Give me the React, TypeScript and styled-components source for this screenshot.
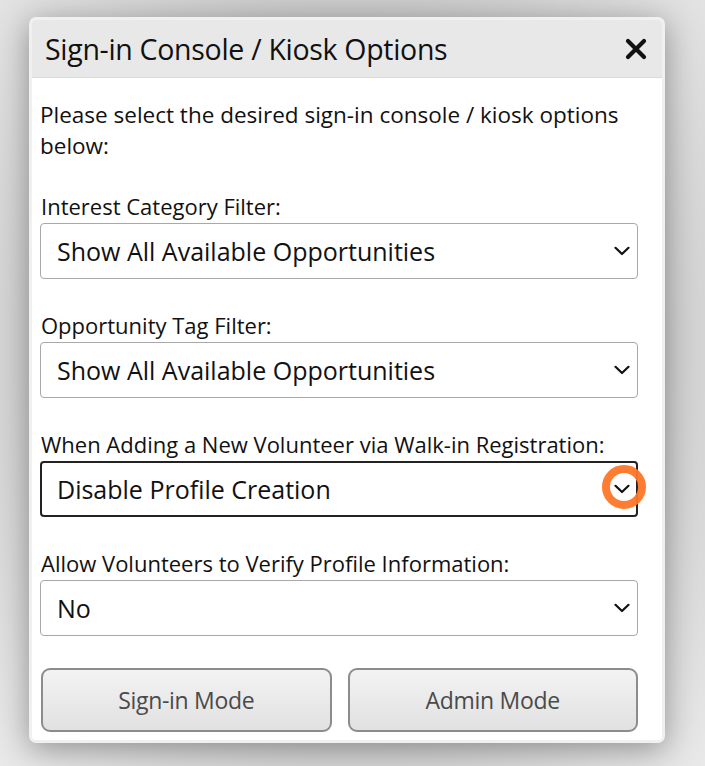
import React from "react";
import styled, { createGlobalStyle } from "styled-components";

const Global = createGlobalStyle`
  html, body { margin: 0; padding: 0; }
  body {
    width: 705px;
    height: 766px;
    background: #dcdcdc;
    font-family: "Open Sans", "Liberation Sans", sans-serif;
    overflow: hidden;
  }
`;

const Page = styled.div`
  width: 705px;
  height: 766px;
  padding: 17px 0 0 29px;
  box-sizing: border-box;
  background: radial-gradient(ellipse at 50% 45%, #b9b9b9 0%, #c9c9c9 55%, #e9e9e9 100%);
`;

const Dialog = styled.div`
  width: 636px;
  height: 726px;
  box-sizing: border-box;
  background: #fff;
  border: 3px solid #f0f0f0;
  border-radius: 7px;
  box-shadow: 0 6px 30px rgba(0, 0, 0, 0.35);
  overflow: hidden;
  display: flex;
  flex-direction: column;
`;

const Header = styled.div`
  height: 57px;
  background: #e8e8e8;
  border-bottom: 1px solid #dadada;
  display: flex;
  align-items: center;
  justify-content: space-between;
  padding: 0 14px 0 13px;
`;

const Title = styled.h1`
  margin: 0;
  font-size: 28.5px;
  font-weight: 400;
  color: #111;
  letter-spacing: -0.3px;
`;

const Close = styled.button`
  border: none;
  background: none;
  padding: 0;
  width: 24px;
  height: 24px;
  display: flex;
  align-items: center;
  justify-content: center;
`;

const Body = styled.div`
  padding: 21px 24px 0 8px;
  display: flex;
  flex-direction: column;
`;

const Intro = styled.p`
  margin: 0 0 30px 0;
  font-size: 22.5px;
  line-height: 31px;
  color: #111;
`;

const Field = styled.div`
  display: flex;
  flex-direction: column;
  margin-bottom: 31px;
`;

const Label = styled.label`
  font-size: 22px;
  line-height: 30px;
  color: #111;
  margin-bottom: 2px;
  padding-left: 1px;
`;

const SelectBox = styled.div<{ $focused?: boolean }>`
  position: relative;
  height: 56px;
  box-sizing: border-box;
  border: ${(p) => (p.$focused ? "2px solid #222" : "1px solid #a8a8a8")};
  border-radius: 4px;
  display: flex;
  align-items: center;
  justify-content: space-between;
  padding: 0 ${(p) => (p.$focused ? "6px 0 15px" : "7px 0 16px")};
  font-size: 25px;
  color: #111;
  background: #fff;
`;

const Ring = styled.div`
  position: absolute;
  right: -10px;
  top: 50%;
  width: 28px;
  height: 28px;
  margin-top: -24px;
  border: 8px solid #ff7627;
  border-radius: 50%;
  opacity: 0.95;
  pointer-events: none;
`;

const Buttons = styled.div`
  display: grid;
  grid-template-columns: 1fr 1fr;
  gap: 16px;
  padding-left: 1px;
  margin-top: 1px;
`;

const ModeButton = styled.button`
  height: 64px;
  border: 2px solid #8c8c8c;
  border-radius: 9px;
  background: linear-gradient(#f3f3f3, #e1e1e1);
  font-family: "Open Sans", "Liberation Sans", sans-serif;
  font-size: 23px;
  color: #4a4a4a;
  letter-spacing: -0.3px;
`;

const Chevron = () => (
  <svg width="16" height="10" viewBox="0 0 16 10">
    <path d="M1.5 1.8 L8 8 L14.5 1.8" fill="none" stroke="#111" strokeWidth="2.2" strokeLinecap="round" strokeLinejoin="round" />
  </svg>
);

const Select = ({ value, focused }: { value: string; focused?: boolean }) => (
  <SelectBox $focused={focused}>
    <span>{value}</span>
    <Chevron />
    {focused && <Ring />}
  </SelectBox>
);

export default function App() {
  return (
    <>
      <Global />
      <Page>
        <Dialog>
          <Header>
            <Title>Sign-in Console / Kiosk Options</Title>
            <Close aria-label="Close">
              <svg width="22" height="22" viewBox="0 0 22 22">
                <path d="M3 3 L19 19 M19 3 L3 19" stroke="#111" strokeWidth="4.2" strokeLinecap="round" />
              </svg>
            </Close>
          </Header>
          <Body>
            <Intro>Please select the desired sign-in console / kiosk options below:</Intro>
            <Field>
              <Label>Interest Category Filter:</Label>
              <Select value="Show All Available Opportunities" />
            </Field>
            <Field>
              <Label>Opportunity Tag Filter:</Label>
              <Select value="Show All Available Opportunities" />
            </Field>
            <Field>
              <Label>When Adding a New Volunteer via Walk-in Registration:</Label>
              <Select value="Disable Profile Creation" focused />
            </Field>
            <Field>
              <Label>Allow Volunteers to Verify Profile Information:</Label>
              <Select value="No" />
            </Field>
            <Buttons>
              <ModeButton>Sign-in Mode</ModeButton>
              <ModeButton>Admin Mode</ModeButton>
            </Buttons>
          </Body>
        </Dialog>
      </Page>
    </>
  );
}
